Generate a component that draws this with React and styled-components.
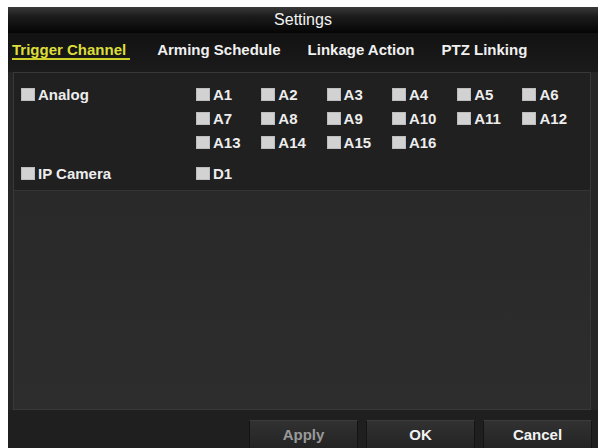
import React from "react";
import styled, { createGlobalStyle } from "styled-components";

const Global = createGlobalStyle`
  html, body { margin: 0; padding: 0; background: #ffffff; overflow: hidden; }
  body { width: 598px; height: 448px; font-family: "Liberation Sans", Arial, sans-serif; }
`;

const Screen = styled.div`
  margin: 7px 0 0 8px;
  width: 590px;
  height: 441px;
  background: #262626;
  display: flex;
  flex-direction: column;
  overflow: hidden;
`;

const TitleBar = styled.div`
  height: 26px;
  flex: none;
  background: linear-gradient(#3a3a3a 0%, #1c1c1c 35%, #050505 100%);
  color: #f2f2f2;
  font-size: 16px;
  line-height: 26px;
  text-align: center;
`;

const TabBar = styled.div`
  height: 39px;
  flex: none;
  box-sizing: border-box;
  padding: 8px 0 0 4px;
  display: flex;
  gap: 27px;
  background: linear-gradient(#121212, #1b1b1b);
`;

const Tab = styled.div`
  font-size: 15px;
  font-weight: bold;
  line-height: 17px;
  color: ${(p) => (p.$active ? "#dede3a" : "#f0f0f0")};
  border-bottom: 2px solid ${(p) => (p.$active ? "#cfcf2a" : "transparent")};
  padding-right: ${(p) => (p.$active ? "4px" : "0")};
  white-space: nowrap;
  height: 17px;
`;

const Panel = styled.div`
  margin: 0 7px 0 5px;
  height: 338px;
  flex: none;
  box-sizing: border-box;
  border: 1px solid #383838;
  display: flex;
  flex-direction: column;
`;

const Rows = styled.div`
  background: #202020;
  padding: 9px 0 5px 7px;
  display: flex;
  flex-direction: column;
  gap: 7px;
  border-bottom: 1px solid #353535;
`;

const Section = styled.div`
  display: flex;
`;

const Label = styled.div`
  width: 175px;
  height: 24px;
  display: flex;
  align-items: center;
`;

const ChannelGrid = styled.div`
  display: grid;
  grid-template-columns: repeat(6, 65.3px);
  grid-auto-rows: 24px;
`;

const Item = styled.div`
  display: flex;
  align-items: center;
  height: 24px;
`;

const Box = styled.span`
  width: 14px;
  height: 13px;
  background: #d2d2d2;
  box-shadow: inset 0 0 0 1px #bdbdbd;
  margin-right: 3px;
  flex: none;
`;

const Text = styled.span`
  font-size: 15px;
  font-weight: bold;
  color: #ededed;
  white-space: nowrap;
`;

const Filler = styled.div`
  flex: 1;
  background: linear-gradient(#292929, #2d2d2d);
`;

const ButtonBar = styled.div`
  flex: 1;
  background: #1f1f1f;
  display: flex;
  justify-content: flex-end;
  align-items: flex-start;
  padding: 10px 6px 0 0;
  gap: 8px;
  overflow: hidden;
`;

const Button = styled.div`
  width: 109px;
  height: 30px;
  flex: none;
  box-sizing: border-box;
  border: 1px solid #141414;
  border-top-color: #3c3c3c;
  background: linear-gradient(#313131, #232323);
  color: ${(p) => (p.$disabled ? "#9a9a9a" : "#f2f2f2")};
  font-size: 15px;
  font-weight: bold;
  line-height: 28px;
  text-align: center;
`;

const analog = Array.from({ length: 16 }, (_, i) => `A${i + 1}`);

function Check({ label }) {
  return (
    <Item>
      <Box />
      <Text>{label}</Text>
    </Item>
  );
}

export default function App() {
  return (
    <>
      <Global />
      <Screen>
        <TitleBar>Settings</TitleBar>
        <TabBar>
          <Tab $active>Trigger Channel</Tab>
          <Tab>Arming Schedule</Tab>
          <Tab>Linkage Action</Tab>
          <Tab>PTZ Linking</Tab>
        </TabBar>
        <Panel>
          <Rows>
            <Section>
              <Label>
                <Check label="Analog" />
              </Label>
              <ChannelGrid>
                {analog.map((a) => (
                  <Check key={a} label={a} />
                ))}
              </ChannelGrid>
            </Section>
            <Section>
              <Label>
                <Check label="IP Camera" />
              </Label>
              <ChannelGrid>
                <Check label="D1" />
              </ChannelGrid>
            </Section>
          </Rows>
          <Filler />
        </Panel>
        <ButtonBar>
          <Button $disabled>Apply</Button>
          <Button>OK</Button>
          <Button>Cancel</Button>
        </ButtonBar>
      </Screen>
    </>
  );
}
